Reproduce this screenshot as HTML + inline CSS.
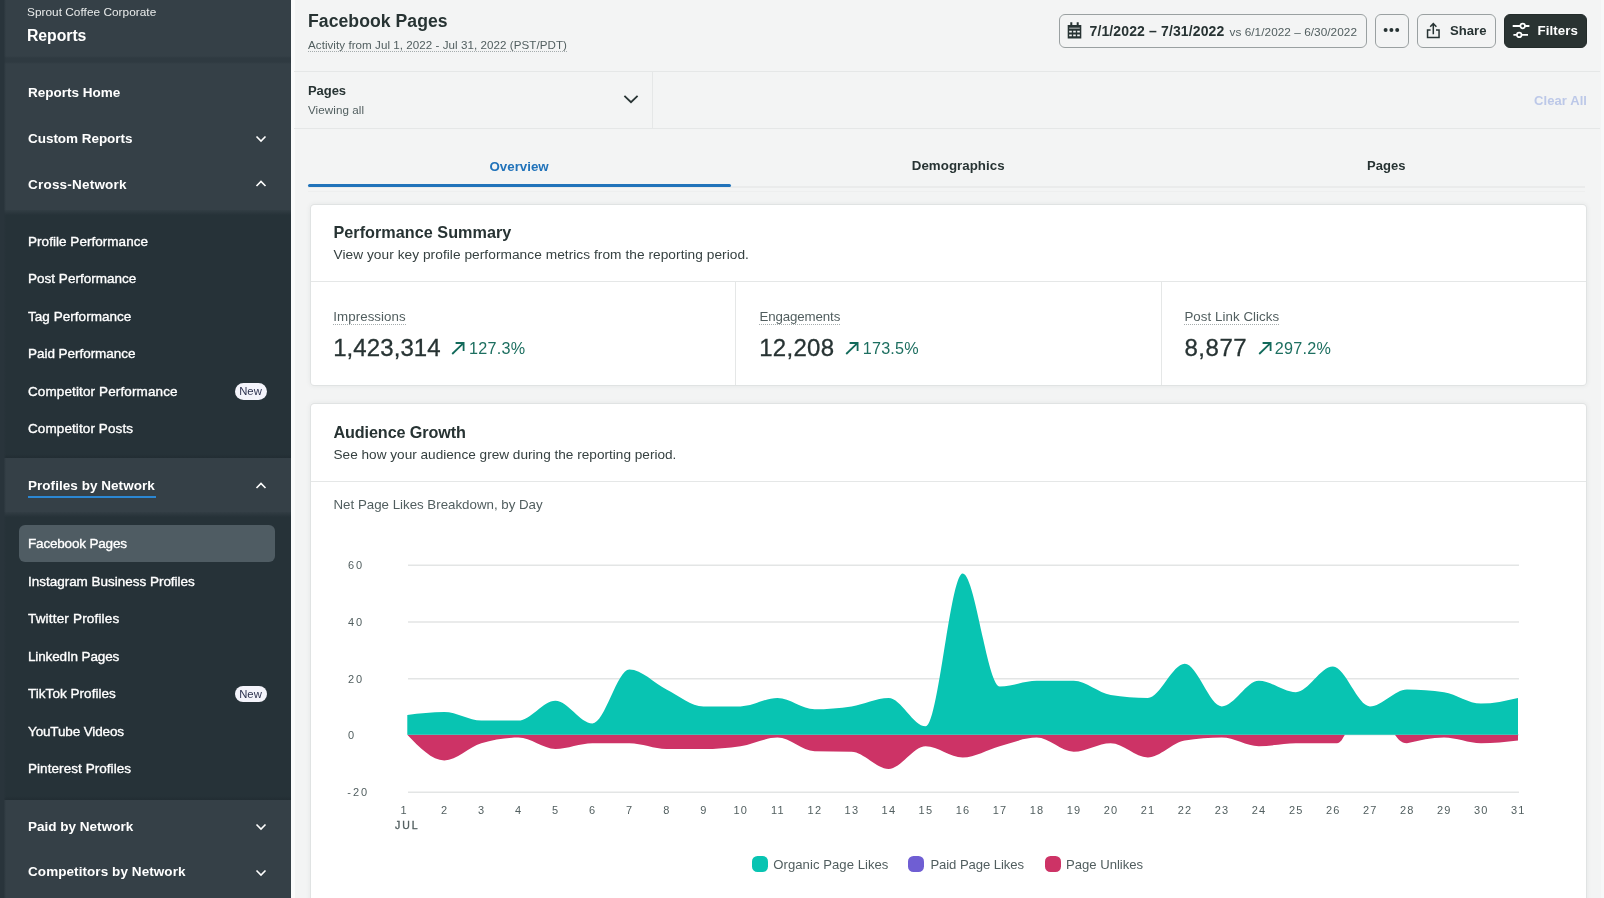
<!DOCTYPE html>
<html lang="en">
<head>
<meta charset="utf-8">
<title>Facebook Pages Report</title>
<style>
*{box-sizing:border-box;margin:0;padding:0}
html,body{width:1604px;height:898px;overflow:hidden;background:#f3f4f4}
body{font-family:"Liberation Sans",Arial,sans-serif;color:#273333;position:relative;font-size:13px;line-height:1}
#app{position:absolute;left:0;top:0;width:1604px;height:898px;overflow:hidden;will-change:transform}
.abs{position:absolute;white-space:nowrap}
/* ---------- sidebar ---------- */
#side{position:absolute;left:0;top:0;width:291px;height:898px;background:#354047;color:#fff;overflow:hidden}
#side .strip{position:absolute;left:0;top:0;width:6px;height:898px;background:linear-gradient(90deg,#29343b 0,#29343b 60%,rgba(41,52,59,0) 100%)}
#side .dark{position:absolute;left:0;width:291px;background:#263238}
#side .dark:before{content:"";position:absolute;left:0;top:0;width:100%;height:5px;background:linear-gradient(#323d44,#263238)}
#side .dark:after{content:"";position:absolute;left:0;bottom:0;width:100%;height:4px;background:linear-gradient(#263238,#222d33)}
#side .shadow{position:absolute;left:0;width:291px;height:8px;top:56px;background:linear-gradient(#354047,#2f3a41 25%,#2f3a41 75%,#354047)}
#side .org{left:27px;top:5.5px;font-size:11.8px;color:#e9ebeb;line-height:12px}
#side .ttl{left:27px;top:26px;font-size:15.8px;font-weight:bold;line-height:18px}
#side .h{left:28px;font-size:13.5px;font-weight:bold;line-height:16px}
#side .i{left:28px;font-size:13.5px;line-height:16px;-webkit-text-stroke:0.35px #fff}
#side .sel{position:absolute;left:19px;top:525px;width:256px;height:37px;border-radius:6px;background:#4f5c63}
#side .ul{position:absolute;left:28px;top:496px;width:128px;height:2px;background:#2b87d3}
#side .new{position:absolute;left:234.5px;width:32px;height:16.5px;border-radius:8.5px;background:#f4f4fb;color:#2e3350;font-size:11.3px;line-height:16.5px;text-align:center}
#side svg{position:absolute;left:255px}
/* ---------- header ---------- */
.hline{position:absolute;height:1px;background:#e5e7e7}
.vline{position:absolute;width:1px;background:#e5e7e7}
.btn{position:absolute;top:13.5px;height:34.5px;border:1.4px solid #9aa0a1;border-radius:6px}
.card{position:absolute;left:310.5px;width:1275px;background:#fff;border-radius:3.5px;box-shadow:0 0 0 1px rgba(39,51,51,.05),0 0 5px 1px rgba(39,51,51,.07)}
.h2{font-size:16.2px;font-weight:bold;line-height:18px;color:#273333}
.sub{font-size:13px;line-height:16px;color:#364141}
.lbl{font-size:13.3px;line-height:15px;color:#515e5f;border-bottom:1px dotted #a5acad}
.num{font-size:24px;line-height:28px;color:#273333;-webkit-text-stroke:0.3px #273333}
.pct{font-size:16.2px;line-height:20px;color:#1d6f60}
.ax{font-size:11px;fill:#515e5f;letter-spacing:1.2px;font-family:"Liberation Sans",Arial,sans-serif}
.lg{font-size:13.1px;line-height:16px;color:#515e5f;top:856.9px}
.sw{position:absolute;top:856.2px;width:16px;height:16px;border-radius:5.5px}
</style>
</head>
<body>
<div id="app">
<!-- ================= SIDEBAR ================= -->
<nav id="side">
  <div class="dark" style="top:210px;height:248px"></div>
  <div class="dark" style="top:512px;height:288px"></div>
  <div class="shadow"></div>
  <div class="strip"></div>
  <div class="abs org" style="letter-spacing:0.04px">Sprout Coffee Corporate</div>
  <div class="abs ttl" style="top:27px;letter-spacing:-0.05px">Reports</div>

  <div class="abs h" style="top:84.7px;letter-spacing:0.00px">Reports Home</div>
  <div class="abs h" style="top:130.5px;letter-spacing:-0.04px">Custom Reports</div>
  <svg style="top:133px" width="12" height="12" viewBox="0 0 12 12"><path d="M1.5 3.5 L6 8 L10.5 3.5" fill="none" stroke="#fff" stroke-width="1.6"/></svg>
  <div class="abs h" style="top:176.5px;letter-spacing:0.21px">Cross-Network</div>
  <svg style="top:178px" width="12" height="12" viewBox="0 0 12 12"><path d="M1.5 8 L6 3.5 L10.5 8" fill="none" stroke="#fff" stroke-width="1.6"/></svg>

  <div class="abs i" style="top:233.5px;letter-spacing:0.04px">Profile Performance</div>
  <div class="abs i" style="top:271px;letter-spacing:0.02px">Post Performance</div>
  <div class="abs i" style="top:308.5px;letter-spacing:0.04px">Tag Performance</div>
  <div class="abs i" style="top:346px;letter-spacing:-0.04px">Paid Performance</div>
  <div class="abs i" style="top:383.5px;letter-spacing:0.12px">Competitor Performance</div>
  <div class="new" style="top:383.3px">New</div>
  <div class="abs i" style="top:421px;letter-spacing:0.10px">Competitor Posts</div>

  <div class="abs h" style="top:478.4px;letter-spacing:0.04px">Profiles by Network</div>
  <div class="ul"></div>
  <svg style="top:480px" width="12" height="12" viewBox="0 0 12 12"><path d="M1.5 8 L6 3.5 L10.5 8" fill="none" stroke="#fff" stroke-width="1.6"/></svg>

  <div class="sel"></div>
  <div class="abs i" style="top:536.2px;letter-spacing:-0.18px">Facebook Pages</div>
  <div class="abs i" style="top:573.6px;letter-spacing:-0.02px">Instagram Business Profiles</div>
  <div class="abs i" style="top:611.1px;letter-spacing:0.18px">Twitter Profiles</div>
  <div class="abs i" style="top:648.5px;letter-spacing:-0.14px">LinkedIn Pages</div>
  <div class="abs i" style="top:686px;letter-spacing:0.04px">TikTok Profiles</div>
  <div class="new" style="top:685.8px">New</div>
  <div class="abs i" style="top:724px;letter-spacing:-0.14px">YouTube Videos</div>
  <div class="abs i" style="top:760.9px;letter-spacing:0.06px">Pinterest Profiles</div>

  <div class="abs h" style="top:818.7px;letter-spacing:0.01px">Paid by Network</div>
  <svg style="top:821px" width="12" height="12" viewBox="0 0 12 12"><path d="M1.5 3.5 L6 8 L10.5 3.5" fill="none" stroke="#fff" stroke-width="1.6"/></svg>
  <div class="abs h" style="top:864.4px;letter-spacing:0.07px">Competitors by Network</div>
  <svg style="top:867px" width="12" height="12" viewBox="0 0 12 12"><path d="M1.5 3.5 L6 8 L10.5 3.5" fill="none" stroke="#fff" stroke-width="1.6"/></svg>
</nav>

<div style="position:absolute;left:291px;top:0;width:3.5px;height:898px;background:#fafbfb"></div>
<div style="position:absolute;left:1600.5px;top:0;width:3.5px;height:898px;background:#f7f8f8"></div>
<!-- ================= HEADER ================= -->
<header>
  <h1 class="abs" style="left:308px;top:10.5px;font-size:17.6px;line-height:20px;font-weight:bold;color:#273333;letter-spacing:0.06px">Facebook Pages</h1>
  <div class="abs" style="left:308px;top:37.6px;font-size:11.6px;line-height:13px;color:#515e5f;border-bottom:1px dotted #a5acad;letter-spacing:0.05px">Activity from Jul 1, 2022 - Jul 31, 2022 (PST/PDT)</div>

  <div class="btn" style="left:1059px;width:308px"></div>
  <svg class="abs" style="left:1067px;top:22px" width="15" height="17" viewBox="0 0 15 17"><path d="M3.3 0.2h2v3h-2zM9.7 0.2h2v3h-2z" fill="#273333"/><path d="M0.7 3h13.6v13.6H0.7zM2.2 5.7h10.6v0.8H2.2zM2.2 8.65h2.6v1.9h-2.6zM6.2 8.65h2.6v1.9h-2.6zM10.2 8.65h2.6v1.9h-2.6zM2.2 12.45h2.6v1.9h-2.6zM6.2 12.45h2.6v1.9h-2.6zM10.2 12.45h2.6v1.9h-2.6z" fill="#273333" fill-rule="evenodd"/></svg>
  <div class="abs" style="left:1089.5px;top:23.3px;font-size:14px;line-height:16px;font-weight:bold;color:#273333;letter-spacing:0.13px">7/1/2022 – 7/31/2022</div>
  <div class="abs" style="left:1229.5px;top:25px;font-size:11.8px;line-height:14px;color:#515e5f;letter-spacing:0.04px">vs 6/1/2022 – 6/30/2022</div>

  <div class="btn" style="left:1375px;width:34px"></div>
  <svg class="abs" style="left:1383px;top:27px" width="17" height="6" viewBox="0 0 17 6"><circle cx="2.6" cy="3" r="2" fill="#273333"/><circle cx="8.4" cy="3" r="2" fill="#273333"/><circle cx="14.2" cy="3" r="2" fill="#273333"/></svg>

  <div class="btn" style="left:1417px;width:79px"></div>
  <svg class="abs" style="left:1426px;top:22px" width="15" height="17" viewBox="0 0 15 17"><path d="M4.6 7.9H1.55v7.7h11.5V7.9H10" fill="none" stroke="#273333" stroke-width="1.5"/><path d="M7.3 12.3V1.6M4.2 4.7l3.1-3.1 3.1 3.1" fill="none" stroke="#273333" stroke-width="1.5"/></svg>
  <div class="abs" style="left:1450px;top:23.3px;font-size:13.1px;line-height:16px;font-weight:bold;color:#273333;letter-spacing:0.02px">Share</div>

  <div class="btn" style="left:1504px;width:83px;background:#2a3332;border-color:#232b2a"></div>
  <svg class="abs" style="left:1512px;top:22px" width="18" height="17" viewBox="0 0 18 17"><path d="M0.7 4h7.6M13.1 4h4.3M1.4 12.9h3.4M9.6 12.9h6.4" stroke="#fff" stroke-width="1.8" fill="none"/><circle cx="10.7" cy="4" r="2.3" fill="none" stroke="#fff" stroke-width="1.7"/><circle cx="7.2" cy="12.9" r="2.3" fill="none" stroke="#fff" stroke-width="1.7"/></svg>
  <div class="abs" style="left:1537.5px;top:23.3px;font-size:13.3px;line-height:16px;font-weight:bold;color:#fff;letter-spacing:0.07px">Filters</div>
</header>

<!-- ================= FILTER BAR ================= -->
<section>
  <div class="hline" style="left:294px;top:71px;width:1306px"></div>
  <div class="hline" style="left:294px;top:128px;width:1306px"></div>
  <div class="vline" style="left:652px;top:71px;height:58px"></div>
  <div class="abs" style="left:308px;top:83px;font-size:13px;line-height:16px;font-weight:bold;color:#273333;letter-spacing:-0.05px">Pages</div>
  <div class="abs" style="left:308px;top:103px;font-size:11.6px;line-height:14px;color:#515e5f;letter-spacing:0.08px">Viewing all</div>
  <svg class="abs" style="left:623px;top:93px" width="16" height="12" viewBox="0 0 16 12"><path d="M1.4 2.8 L8 9.2 L14.6 2.8" fill="none" stroke="#273333" stroke-width="1.8"/></svg>
  <div class="abs" style="left:1534px;top:92.5px;font-size:13px;line-height:15px;font-weight:bold;color:#bcc8e8;letter-spacing:0.09px">Clear All</div>
</section>

<!-- ================= TABS ================= -->
<section>
  <div class="hline" style="left:308px;top:186px;width:1277px;height:1.5px;background:#eaebeb"></div>
  <div class="hline" style="left:308px;top:191px;width:1277px;background:#eeefef"></div>
  <div style="position:absolute;left:308px;top:184px;width:422.5px;height:3px;background:#2173ba;border-radius:1.5px"></div>
  <div class="abs" style="left:489.5px;top:158.5px;font-size:13.3px;line-height:16px;font-weight:bold;color:#2173ba;letter-spacing:0.01px">Overview</div>
  <div class="abs" style="left:911.8px;top:158.3px;font-size:13.3px;line-height:16px;font-weight:bold;color:#273333;letter-spacing:0.04px">Demographics</div>
  <div class="abs" style="left:1367.1px;top:158.3px;font-size:13px;line-height:16px;font-weight:bold;color:#273333;letter-spacing:0.05px">Pages</div>
</section>

<!-- ================= PERFORMANCE SUMMARY ================= -->
<section class="card" style="top:204.5px;height:180.5px">
  <div class="hline" style="left:0;top:76.5px;width:1275px"></div>
  <div class="vline" style="left:424px;top:77px;height:103.5px"></div>
  <div class="vline" style="left:850px;top:77px;height:103.5px"></div>
</section>
<div class="abs h2" style="left:333.5px;top:223px;letter-spacing:0.03px">Performance Summary</div>
<div class="abs sub" style="left:333.5px;top:247.3px;font-size:13.7px;letter-spacing:0.05px">View your key profile performance metrics from the reporting period.</div>

<div class="abs lbl" style="left:333.3px;top:309px;letter-spacing:0.07px">Impressions</div>
<div class="abs num" style="left:333.2px;top:334px;letter-spacing:0.08px">1,423,314</div>
<svg class="abs arr" style="left:451px;top:341.5px" width="14" height="13" viewBox="0 0 14 13"><path d="M1.2 12L12.4 1.2M4.6 1H12.6V9" fill="none" stroke="#126a5b" stroke-width="1.8"/></svg>
<div class="abs pct" style="left:469px;top:338.3px;letter-spacing:0.26px">127.3%</div>

<div class="abs lbl" style="left:759.4px;top:309px;letter-spacing:-0.11px">Engagements</div>
<div class="abs num" style="left:759.2px;top:334px;letter-spacing:0.30px">12,208</div>
<svg class="abs arr" style="left:845px;top:341.5px" width="14" height="13" viewBox="0 0 14 13"><path d="M1.2 12L12.4 1.2M4.6 1H12.6V9" fill="none" stroke="#126a5b" stroke-width="1.8"/></svg>
<div class="abs pct" style="left:862.8px;top:338.3px;letter-spacing:0.18px">173.5%</div>

<div class="abs lbl" style="left:1184.4px;top:309px;letter-spacing:0.06px">Post Link Clicks</div>
<div class="abs num" style="left:1184.4px;top:334px;letter-spacing:0.56px">8,877</div>
<svg class="abs arr" style="left:1257.5px;top:341.5px" width="14" height="13" viewBox="0 0 14 13"><path d="M1.2 12L12.4 1.2M4.6 1H12.6V9" fill="none" stroke="#126a5b" stroke-width="1.8"/></svg>
<div class="abs pct" style="left:1274.8px;top:338.3px;letter-spacing:0.24px">297.2%</div>

<!-- ================= AUDIENCE GROWTH ================= -->
<section class="card" style="top:404px;height:520px">
  <div class="hline" style="left:0;top:77px;width:1275px"></div>
</section>
<div class="abs h2" style="left:333.5px;top:423px;letter-spacing:-0.12px">Audience Growth</div>
<div class="abs sub" style="left:333.5px;top:447px;font-size:13.6px;letter-spacing:0.01px">See how your audience grew during the reporting period.</div>
<div class="abs sub" style="left:333.5px;top:496.7px;font-size:13.3px;color:#515e5f;letter-spacing:-0.00px">Net Page Likes Breakdown, by Day</div>

<svg class="abs" style="left:0;top:0" width="1604" height="898" viewBox="0 0 1604 898">
  <g stroke="#e3e5e5" stroke-width="1.5">
    <line x1="408" x2="1519" y1="565.2" y2="565.2"/>
    <line x1="408" x2="1519" y1="622" y2="622"/>
    <line x1="408" x2="1519" y1="678.8" y2="678.8"/>
    <line x1="408" x2="1519" y1="734.8" y2="734.8"/>
    <line x1="408" x2="1519" y1="792.2" y2="792.2"/>
  </g>
  <path fill="#cd3366" d="M407.3,734.8C419.6,747.6,432.0,760.4,444.3,760.4C456.7,760.4,469.0,747.1,481.3,743.3C493.7,739.5,506.0,737.6,518.4,737.6C530.7,737.6,543.1,749.0,555.4,749.0C567.7,749.0,580.1,743.3,592.4,743.3C604.8,743.3,617.1,743.3,629.4,743.3C641.8,743.3,654.1,749.0,666.5,749.0C678.8,749.0,691.1,749.0,703.5,749.0C715.8,749.0,728.2,748.1,740.5,746.2C752.9,744.3,765.2,737.6,777.5,737.6C789.9,737.6,802.2,750.9,814.6,751.3C826.9,751.7,839.2,751.5,851.6,751.8C863.9,752.2,876.3,768.9,888.6,768.9C900.9,768.9,913.3,746.2,925.6,746.2C938.0,746.2,950.3,757.5,962.7,757.5C975.0,757.5,987.3,749.5,999.7,746.2C1012.0,742.8,1024.4,737.6,1036.7,737.6C1049.0,737.6,1061.4,751.8,1073.7,751.8C1086.1,751.8,1098.4,743.3,1110.7,743.3C1123.1,743.3,1135.4,757.5,1147.8,757.5C1160.1,757.5,1172.4,742.4,1184.8,740.5C1197.1,738.6,1209.5,737.6,1221.8,737.6C1234.2,737.6,1246.5,746.2,1258.8,746.2C1271.2,746.2,1283.5,743.3,1295.9,743.3C1308.2,743.3,1320.5,743.3,1332.9,743.3L1336.9,743.3C1340.9,743.3,1342.9,737.8,1344.9,734.8L407.3,734.8Z"/>
  <path fill="#cd3366" d="M1394.9,734.8C1397.9,738.8,1400.9,743.3,1406.9,743.3C1419.3,740.5,1431.6,737.6,1444.0,737.6C1456.3,737.6,1468.6,743.3,1481.0,743.3C1493.3,743.3,1505.7,741.9,1518.0,740.5L1518.0,734.8Z"/>
  <path fill="#08c4b2" d="M407.3,714.9C419.6,713.5,432.0,712.1,444.3,712.1C456.7,712.1,469.0,720.6,481.3,720.6C493.7,720.6,506.0,720.6,518.4,720.6C530.7,720.6,543.1,700.7,555.4,700.7C567.7,700.7,580.1,723.4,592.4,723.4C604.8,723.4,617.1,669.5,629.4,669.5C641.8,669.5,654.1,683.2,666.5,689.4C678.8,695.5,691.1,706.4,703.5,706.4C715.8,706.4,728.2,706.4,740.5,706.4C752.9,706.4,765.2,697.9,777.5,697.9C789.9,697.9,802.2,709.2,814.6,709.2C826.9,709.2,839.2,708.3,851.6,706.4C863.9,704.5,876.3,697.9,888.6,697.9C900.9,697.9,913.3,726.3,925.6,726.3C938.0,726.3,950.3,573.5,962.7,573.5C975.0,573.5,987.3,686.5,999.7,686.5C1012.0,686.5,1024.4,680.8,1036.7,680.8C1049.0,680.8,1061.4,680.8,1073.7,680.8C1086.1,680.8,1098.4,693.1,1110.7,695.0C1123.1,696.9,1135.4,697.9,1147.8,697.9C1160.1,697.9,1172.4,663.8,1184.8,663.8C1197.1,663.8,1209.5,706.4,1221.8,706.4C1234.2,706.4,1246.5,680.8,1258.8,680.8C1271.2,680.8,1283.5,692.2,1295.9,692.2C1308.2,692.2,1320.5,666.6,1332.9,666.6C1345.2,666.6,1357.6,706.4,1369.9,706.4C1382.2,706.4,1394.6,689.4,1406.9,689.4C1419.3,689.4,1431.6,690.3,1444.0,692.2C1456.3,694.1,1468.6,703.6,1481.0,703.6C1493.3,703.6,1505.7,700.7,1518.0,697.9L1518.0,734.8L407.3,734.8Z"/>
  <g class="ax" text-anchor="start" style="letter-spacing:2px">
    <text x="348" y="569">60</text>
    <text x="348" y="626">40</text>
    <text x="348" y="683">20</text>
    <text x="348" y="739">0</text>
    <text x="347.3" y="796">-20</text>
  </g>
  <g class="ax" text-anchor="middle">
    <text x="404.2" y="814.3">1</text>
    <text x="444.6" y="814.3">2</text>
    <text x="481.6" y="814.3">3</text>
    <text x="518.7" y="814.3">4</text>
    <text x="555.7" y="814.3">5</text>
    <text x="592.7" y="814.3">6</text>
    <text x="629.7" y="814.3">7</text>
    <text x="666.8" y="814.3">8</text>
    <text x="703.8" y="814.3">9</text>
    <text x="740.8" y="814.3">10</text>
    <text x="777.8" y="814.3">11</text>
    <text x="814.9" y="814.3">12</text>
    <text x="851.9" y="814.3">13</text>
    <text x="888.9" y="814.3">14</text>
    <text x="925.9" y="814.3">15</text>
    <text x="963.0" y="814.3">16</text>
    <text x="1000.0" y="814.3">17</text>
    <text x="1037.0" y="814.3">18</text>
    <text x="1074.0" y="814.3">19</text>
    <text x="1111.0" y="814.3">20</text>
    <text x="1148.1" y="814.3">21</text>
    <text x="1185.1" y="814.3">22</text>
    <text x="1222.1" y="814.3">23</text>
    <text x="1259.1" y="814.3">24</text>
    <text x="1296.2" y="814.3">25</text>
    <text x="1333.2" y="814.3">26</text>
    <text x="1370.2" y="814.3">27</text>
    <text x="1407.2" y="814.3">28</text>
    <text x="1444.3" y="814.3">29</text>
    <text x="1481.3" y="814.3">30</text>
    <text x="1518.3" y="814.3">31</text>
  </g>
  <text class="ax" x="395" y="828.7" style="letter-spacing:2px;font-size:10.5px;stroke:#515e5f;stroke-width:.35px">JUL</text>
</svg>

<div class="sw" style="left:752px;background:#08c4b2"></div>
<div class="abs lg" style="left:773.3px;letter-spacing:0.05px">Organic Page Likes</div>
<div class="sw" style="left:908.4px;background:#6f5ed3"></div>
<div class="abs lg" style="left:930.4px;letter-spacing:-0.07px">Paid Page Likes</div>
<div class="sw" style="left:1044.5px;background:#cd3366"></div>
<div class="abs lg" style="left:1066px;letter-spacing:0.00px">Page Unlikes</div>
</div>
</body>
</html>
